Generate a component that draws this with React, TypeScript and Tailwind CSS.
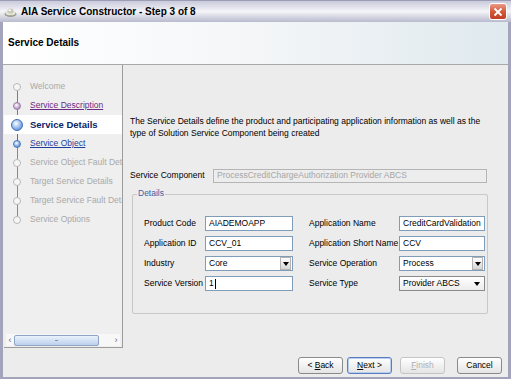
import React from 'react';

const navItems = [
  { label: 'Welcome', state: 'off' },
  { label: 'Service Description', state: 'visited' },
  { label: 'Service Details', state: 'current' },
  { label: 'Service Object', state: 'link' },
  { label: 'Service Object Fault Details', state: 'off' },
  { label: 'Target Service Details', state: 'off' },
  { label: 'Target Service Fault Details', state: 'off' },
  { label: 'Service Options', state: 'off' },
];

function Node({ state }: { state: string }) {
  if (state === 'current') {
    return (
      <span className="w-[12px] h-[12px] rounded-full border border-[#3f6fb8] bg-[radial-gradient(circle_at_40%_35%,#ffffff_0%,#a9c8f0_40%,#3d78c9_100%)]" />
    );
  }
  if (state === 'link') {
    return (
      <span className="w-[8px] h-[8px] rounded-full border border-[#4a78bd] bg-[radial-gradient(circle_at_40%_35%,#ffffff_0%,#8fb4e8_50%,#3f72c0_100%)]" />
    );
  }
  if (state === 'visited') {
    return (
      <span className="w-[8px] h-[8px] rounded-full border border-[#9a7aa8] bg-[radial-gradient(circle_at_40%_35%,#ffffff_0%,#cdb4d6_50%,#9a77aa_100%)]" />
    );
  }
  return <span className="w-[8px] h-[8px] rounded-full border border-[#b8b8b8] bg-[#f6f6f6]" />;
}

function NavList() {
  return (
    <div className="relative pt-[12px]">
      <div className="absolute left-[13px] top-[19px] w-px h-[22px] bg-[#8e6e9c]" />
      <div className="absolute left-[13px] top-[41px] w-px h-[19px] bg-[#8e6e9c]" />
      <div className="absolute left-[13px] top-[60px] w-px h-[19px] bg-[#4a72b8]" />
      <div className="absolute left-[13px] top-[79px] w-px h-[76px] bg-[#8a8a8a]" />
      {navItems.map((n) => (
        <div
          key={n.label}
          className={`relative flex items-center h-[19px] whitespace-nowrap ${n.state === 'current' ? 'bg-white' : ''}`}
        >
          <span className="w-[26px] flex justify-center shrink-0">
            <Node state={n.state} />
          </span>
          <span
            className={
              n.state === 'current'
                ? 'font-bold text-[#0b2466] text-[9.5px]'
                : n.state === 'visited'
                ? 'text-[#6c2b82] underline'
                : n.state === 'link'
                ? 'text-[#1d3f9a] underline'
                : 'text-[#a9a9a9]'
            }
          >
            {n.label}
          </span>
        </div>
      ))}
    </div>
  );
}

function TextBox({ value, w, caret }: { value: string; w: string; caret?: boolean }) {
  return (
    <div className={`${w} h-[15px] bg-white border border-[#7f9db9] flex items-center px-[3px] text-black`}>
      {value}
      {caret && <span className="w-px h-[10px] bg-black ml-px" />}
    </div>
  );
}

function Combo({ value, w }: { value: string; w: string }) {
  return (
    <div className={`${w} h-[15px] bg-white border border-[#7f9db9] flex items-center text-black`}>
      <span className="flex-1 px-[3px]">{value}</span>
      <span className="w-[11px] h-[13px] mr-px border border-[#b4b4b4] bg-gradient-to-b from-[#ffffff] to-[#d6d6d6] flex items-center justify-center">
        <span className="w-0 h-0 border-l-[3px] border-r-[3px] border-t-[4px] border-l-transparent border-r-transparent border-t-black" />
      </span>
    </div>
  );
}

function ButtonCombo({ value, w }: { value: string; w: string }) {
  return (
    <div className={`${w} h-[15px] bg-gradient-to-b from-[#ffffff] to-[#ececec] border border-[#8a8a8a] flex items-center text-black`}>
      <span className="flex-1 px-[3px]">{value}</span>
      <span className="mr-[4px] w-0 h-0 border-l-[3px] border-r-[3px] border-t-[4px] border-l-transparent border-r-transparent border-t-black" />
    </div>
  );
}

function Btn({ children, primary, disabled }: { children: React.ReactNode; primary?: boolean; disabled?: boolean }) {
  return (
    <div
      className={`w-[45px] h-[17px] rounded-[3px] flex items-center justify-center bg-gradient-to-b from-[#ffffff] to-[#e4e4e4] border ${
        primary ? 'border-[#5a7dbf] shadow-[inset_0_0_0_1px_#b9cdef]' : 'border-[#8a8a8a]'
      } ${disabled ? 'text-[#b0b0b0] border-[#c4c4c4]' : 'text-black'}`}
    >
      {children}
    </div>
  );
}

export default function App() {
  return (
    <div className="w-[511px] h-[381px] bg-white overflow-hidden font-['Liberation_Sans',Arial,sans-serif] text-[8.5px] leading-none">
      <div className="h-[379px] flex flex-col">
        {/* title bar */}
        <div className="h-[22px] flex items-center bg-gradient-to-b from-[#c9cadb] via-[#f4f4f8] to-[#b9bacd] border-t border-[#9c9db5] px-[4px]">
          <svg width="13" height="12" viewBox="0 0 13 12" className="mr-[4px]">
            <ellipse cx="6.5" cy="8" rx="6" ry="3" fill="#9a9a8a" />
            <ellipse cx="6.5" cy="7" rx="5" ry="2.3" fill="#e4e4d8" />
            <ellipse cx="6.5" cy="5" rx="3" ry="2.5" fill="#c8c8b8" />
            <ellipse cx="5.8" cy="4.2" rx="1.3" ry="1" fill="#ffffff" />
          </svg>
          <span className="font-bold text-[10px] text-black">AIA Service Constructor - Step 3 of 8</span>
          <div className="ml-auto w-[18px] h-[17px] rounded-[3px] border border-white bg-gradient-to-b from-[#e99a86] via-[#d4583c] to-[#c03e22] flex items-center justify-center">
            <svg width="10" height="10" viewBox="0 0 10 10">
              <path d="M1.5 1.5 L8.5 8.5 M8.5 1.5 L1.5 8.5" stroke="#ffffff" strokeWidth="1.8" />
            </svg>
          </div>
        </div>
        <div className="flex-1 flex flex-col border-x-[3px] border-b-[2px] border-[#a3a4bc]">
          {/* header */}
          <div className="h-[43px] flex items-center pl-[5px] bg-gradient-to-r from-[#ffffff] via-[#f4f6f8] to-[#dfe9ee] border-b border-[#a8a8a8]">
            <span className="font-bold text-[10px] text-black">Service Details</span>
          </div>
          <div className="flex-1 bg-[#ececec] flex flex-col">
            <div className="flex h-[283px]">
              {/* left nav */}
              <div className="w-[119px] ml-px bg-[#efefef] border-r border-b border-[#9c9c9c] flex flex-col overflow-hidden">
                <div className="flex-1 overflow-hidden">
                  <NavList />
                </div>
                <div className="h-[12px] mx-[2px] mb-px flex items-center bg-[#f7f7f7]">
                  <span className="w-[8px] text-[#666] text-[9px] text-center">‹</span>
                  <div className="w-[85px] h-[11px] rounded-[2px] border border-[#8fa3c4] bg-gradient-to-b from-[#eaf2fc] to-[#bcd0ec] flex items-center justify-center">
                    <span className="w-[3px] h-px bg-[#7f93b3]" />
                  </div>
                  <span className="flex-1" />
                  <span className="w-[8px] text-[#666] text-[9px] text-center">›</span>
                </div>
              </div>
              {/* right panel */}
              <div className="flex-1 pt-[50px] pl-[7px]">
                <p className="leading-[12px] text-black w-[358px]">
                  The Service Details define the product and participating application information as well as the type of Solution Service Component being created
                </p>
                <div className="mt-[29px] flex items-center h-[15px]">
                  <span className="w-[83px] text-black">Service Component</span>
                  <div className="w-[274px] h-[14px] border border-[#b5b5b5] bg-[#ededed] flex items-center px-[3px] text-[#a6a6a6]">
                    ProcessCreditChargeAuthorization Provider ABCS
                  </div>
                </div>
                <div className="relative mt-[11px] ml-[2px] w-[356px] h-[120px] border border-[#c8c8c8] rounded-[2px] px-[11px] pt-[21px]">
                  <span className="absolute left-[4px] top-[-6px] px-[1px] bg-[#ececec] text-[#3d5fa6]">Details</span>
                  <div className="grid grid-cols-[61px_88px_16px_90px_86px] gap-y-[5px] items-center">
                    <span>Product Code</span>
                    <TextBox value="AIADEMOAPP" w="w-[88px]" />
                    <span />
                    <span>Application Name</span>
                    <TextBox value="CreditCardValidation" w="w-[86px]" />

                    <span>Application ID</span>
                    <TextBox value="CCV_01" w="w-[88px]" />
                    <span />
                    <span>Application Short Name</span>
                    <TextBox value="CCV" w="w-[86px]" />

                    <span>Industry</span>
                    <Combo value="Core" w="w-[88px]" />
                    <span />
                    <span>Service Operation</span>
                    <Combo value="Process" w="w-[86px]" />

                    <span>Service Version</span>
                    <TextBox value="1" w="w-[88px]" caret />
                    <span />
                    <span>Service Type</span>
                    <ButtonCombo value="Provider ABCS" w="w-[86px]" />
                  </div>
                </div>
              </div>
            </div>
            {/* buttons */}
            <div className="flex-1 flex items-center justify-end pr-[6px] pt-[5px]">
              <Btn>
                &lt;&nbsp;<span className="underline">B</span>ack
              </Btn>
              <span className="w-[4px]" />
              <Btn primary>
                <span className="underline">N</span>ext&nbsp;&gt;
              </Btn>
              <span className="w-[8px]" />
              <Btn disabled>
                <span className="underline">F</span>inish
              </Btn>
              <span className="w-[12px]" />
              <Btn>Cancel</Btn>
            </div>
          </div>
        </div>
      </div>
      <div className="h-[2px] bg-white" />
    </div>
  );
}
